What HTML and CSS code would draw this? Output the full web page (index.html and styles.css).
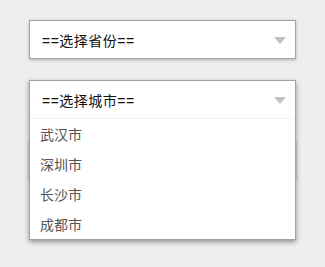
FILE: index.html
```html
<!DOCTYPE html>
<html lang="zh-CN">
<head>
    <meta charset="UTF-8">
    <meta name="viewport" content="width=device-width, initial-scale=1.0">
    <title>省市选择</title>
    <link rel="stylesheet" href="styles.css">
</head>
<body>
    <div class="selects">
        <div class="field">
            <div class="select">
                <div class="select-head">
                    <span>==选择省份==</span>
                    <i class="arrow"></i>
                </div>
            </div>
        </div>

        <div class="field">
            <div class="select open">
                <div class="select-head">
                    <span>==选择城市==</span>
                    <i class="arrow"></i>
                </div>
                <ul class="options">
                    <li>武汉市</li>
                    <li>深圳市</li>
                    <li>长沙市</li>
                    <li>成都市</li>
                </ul>
            </div>
        </div>

        <!-- terceiro campo, escondido atrás da lista aberta -->
        <div class="field">
            <div class="select">
                <div class="select-head">
                    <span></span>
                    <i class="arrow"></i>
                </div>
            </div>
        </div>
    </div>
</body>
</html>
```

FILE: styles.css
```css
html, body {
    min-height: 100vh;
}

body {
    margin: 0;
    background: #eeeeee;
    font-family: "Liberation Sans", "Noto Sans CJK SC", sans-serif;
    font-size: 14px;
    color: #111;
}

.selects {
    display: flex;
    flex-direction: column;
    gap: 21px;
    padding: 20px 29px 60px;
}

.field {
    position: relative;
    height: 39px;
}

.select {
    background: #fff;
    border: 1px solid #a3a3a3;
    box-shadow: 0 1px 3px rgba(0, 0, 0, 0.25);
    box-sizing: border-box;
    height: 39px;
}

.select-head {
    display: flex;
    align-items: center;
    justify-content: space-between;
    height: 37px;
    padding: 0 9px 0 12px;
    letter-spacing: 0.5px;
}

.arrow {
    width: 0;
    height: 0;
    border-left: 6px solid transparent;
    border-right: 6px solid transparent;
    border-top: 7px solid #c2c2c2;
    margin-top: 1px;
}

/* lista aberta por cima do próximo campo */
.select.open {
    position: absolute;
    top: 0;
    left: 0;
    right: 0;
    z-index: 2;
    height: auto;
    box-shadow: 0 2px 5px rgba(0, 0, 0, 0.4);
}

.select.open .select-head {
    border-bottom: 1px solid #f3f3f3;
}

.options {
    list-style: none;
    margin: 0;
    padding: 0;
}

.options li {
    height: 30px;
    line-height: 32px;
    padding-left: 10px;
    color: #555;
}
```
